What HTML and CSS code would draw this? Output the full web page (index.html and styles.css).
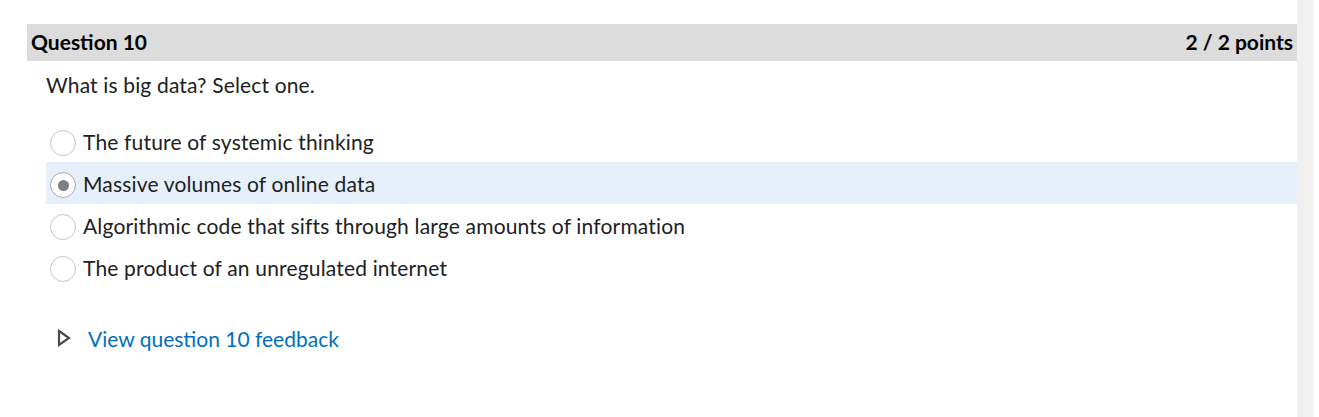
FILE: index.html
```html
<!DOCTYPE html>
<html>
<head>
<meta charset="utf-8">
<link rel="stylesheet" href="styles.css">
</head>
<body>
<div class="page">
  <main class="main">
    <div class="q-header">
      <span class="q-title">Question 10</span>
      <span class="q-points">2 / 2 points</span>
    </div>
    <div class="q-body">
      <p class="q-text">What is big data? Select one.</p>
      <ul class="options">
        <li class="option"><span class="radio"></span><span class="opt-label">The future of systemic thinking</span></li>
        <li class="option selected"><span class="radio checked"></span><span class="opt-label">Massive volumes of online data</span></li>
        <li class="option"><span class="radio"></span><span class="opt-label">Algorithmic code that sifts through large amounts of information</span></li>
        <li class="option"><span class="radio"></span><span class="opt-label">The product of an unregulated internet</span></li>
      </ul>
      <div class="feedback">
        <svg class="tri" width="14" height="18" viewBox="0 0 14 18"><path d="M2 2 L12 9 L2 16 Z" fill="none" stroke="#494c4e" stroke-width="2.2" stroke-linejoin="miter"/></svg>
        <a class="feedback-link" href="#">View question 10 feedback</a>
      </div>
    </div>
  </main>
  <div class="scroll-strip"></div>
</div>
</body>
</html>
```

FILE: styles.css
```css
* { box-sizing: border-box; }
html, body { margin: 0; padding: 0; background: #fff; }
body {
  font-family: Lato, "Open Sans", sans-serif;
  color: #202122;
  height: 417px;
  overflow: hidden;
}
.page {
  display: flex;
  height: 417px;
  padding-left: 27px;
}
.main {
  width: 1270px;
  padding-top: 24px;
}
.scroll-strip {
  width: 16px;
  height: 417px;
  background: #f0f0f0;
}
.q-header {
  height: 37px;
  background: #dcdcdc;
  display: flex;
  align-items: center;
  justify-content: space-between;
  padding: 0 4px 3px;
  font-weight: 700;
  font-size: 21px;
  color: #000;
}
.q-body {
  padding-left: 19px;
}
.q-text {
  margin: 0;
  padding-top: 11px;
  font-size: 21px;
  line-height: 26px;
  height: 59px;
  letter-spacing: 0.15px;
}
.options {
  list-style: none;
  margin: 0;
  padding: 0;
}
.option {
  display: flex;
  align-items: center;
  height: 42px;
  padding-left: 4px;
  font-size: 21px;
  letter-spacing: 0.17px;
}
.option.selected {
  background: #e6f0fa;
}
.radio {
  width: 26px;
  height: 26px;
  border: 1px solid #c4c6c8;
  border-radius: 50%;
  background: #fff;
  margin-right: 7px;
  margin-top: 4px;
  display: flex;
  align-items: center;
  justify-content: center;
  flex: none;
}
.radio.checked {
  border-color: #a8abae;
}
.radio.checked::after {
  content: "";
  width: 11px;
  height: 11px;
  border-radius: 50%;
  background: #7b7f83;
}
.feedback {
  display: flex;
  align-items: center;
  margin-top: 36px;
  padding-left: 11px;
  height: 28px;
}
.tri { margin-right: 17px; }
.feedback-link {
  color: #006fbf;
  text-decoration: none;
  font-size: 21px;
}
```
